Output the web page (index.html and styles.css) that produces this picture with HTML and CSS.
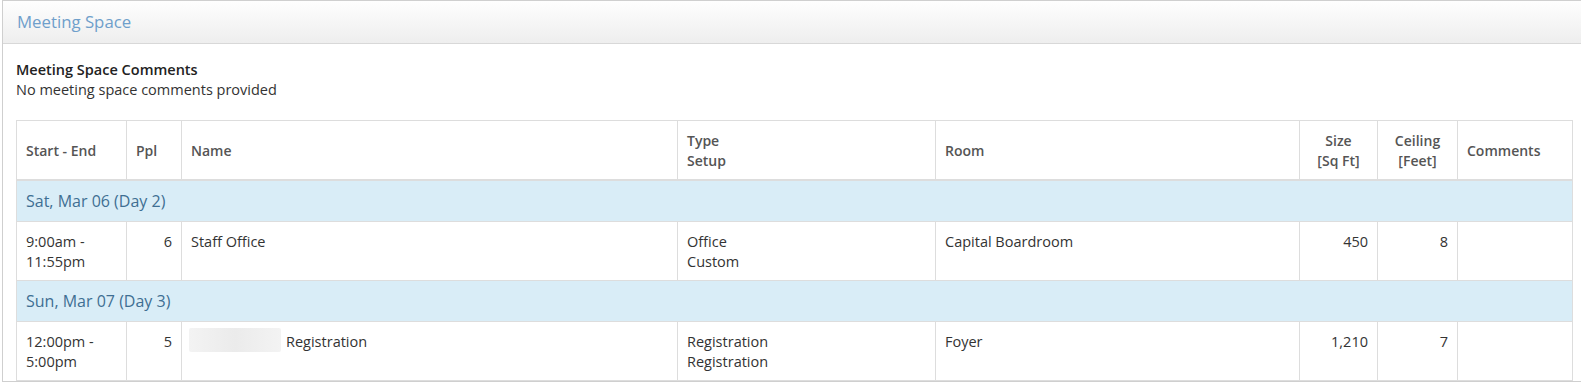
FILE: index.html
```html
<!DOCTYPE html>
<html>
<head>
<meta charset="utf-8">
<link rel="stylesheet" href="styles.css">
</head>
<body>
<div class="panel">
  <div class="panel-heading">Meeting Space</div>
  <div class="panel-body">
    <div class="comments">
      <div class="comments-title">Meeting Space Comments</div>
      <div>No meeting space comments provided</div>
    </div>
    <table class="grid">
      <colgroup>
        <col class="c-time"><col class="c-ppl"><col class="c-name"><col class="c-type"><col class="c-room"><col class="c-size"><col class="c-ceil"><col class="c-comm">
      </colgroup>
      <thead>
        <tr>
          <th>Start - End</th>
          <th>Ppl</th>
          <th>Name</th>
          <th>Type<br>Setup</th>
          <th>Room</th>
          <th class="center">Size<br>[Sq Ft]</th>
          <th class="center">Ceiling<br>[Feet]</th>
          <th>Comments</th>
        </tr>
      </thead>
      <tbody>
        <tr class="day"><td colspan="8">Sat, Mar 06 (Day 2)</td></tr>
        <tr>
          <td>9:00am -<br>11:55pm</td>
          <td class="num">6</td>
          <td>Staff Office</td>
          <td>Office<br>Custom</td>
          <td>Capital Boardroom</td>
          <td class="num">450</td>
          <td class="num">8</td>
          <td></td>
        </tr>
        <tr class="day"><td colspan="8">Sun, Mar 07 (Day 3)</td></tr>
        <tr>
          <td>12:00pm -<br>5:00pm</td>
          <td class="num">5</td>
          <td><span class="redacted"></span>Registration</td>
          <td>Registration<br>Registration</td>
          <td>Foyer</td>
          <td class="num">1,210</td>
          <td class="num">7</td>
          <td></td>
        </tr>
      </tbody>
    </table>
  </div>
</div>
</body>
</html>
```
FILE: styles.css
```css
html, body {
  margin: 0;
  padding: 0;
  background: #fff;
  overflow: hidden;
}
body {
  font-family: "Open Sans", "Liberation Sans", sans-serif;
  font-size: 14.5px;
  line-height: 20px;
  color: #333;
}
.panel {
  box-sizing: border-box;
  width: 1584px;
  margin-left: 2px;
  border: 1px solid #cfcfcf;
  background: #fff;
}
.panel-heading {
  height: 43px;
  box-sizing: border-box;
  padding: 10px 14px 11px;
  font-size: 16.8px;
  line-height: 22px;
  color: #6f9fcb;
  background: linear-gradient(to bottom, #fefefe 0%, #eeeeee 100%);
  border-bottom: 1px solid #d8d8d8;
}
.panel-body {
  padding: 16px 13px 0;
}
.comments-title {
  font-weight: 600;
  color: #222;
}
.grid {
  margin-top: 20px;
  width: 1556px;
  table-layout: fixed;
  border-collapse: collapse;
  border: 1px solid #ddd;
}
.c-time { width: 110px; }
.c-ppl { width: 55px; }
.c-name { width: 496px; }
.c-type { width: 258px; }
.c-room { width: 364px; }
.c-size { width: 78px; }
.c-ceil { width: 80px; }
.c-comm { width: 115px; }
.grid th, .grid td {
  border: 1px solid #ddd;
  text-align: left;
}
.grid th {
  font-size: 14px;
  font-weight: 600;
  color: #555;
  vertical-align: middle;
  padding: 10px 9px 8px;
  height: 40px;
  border-bottom: 2px solid #ddd;
}
.grid td {
  vertical-align: top;
  padding: 10px 9px 8px;
  height: 40px;
}
.grid th.center { text-align: center; }
.grid td.num { text-align: right; }
.grid tr.day td {
  background: #d9edf7;
  color: #3f6f93;
  font-size: 16px;
  line-height: 24px;
  padding: 8px 9px;
  height: 24px;
}
.redacted {
  display: inline-block;
  width: 92px;
  height: 24px;
  margin: -6px 5px 0 -2px;
  vertical-align: middle;
  background: linear-gradient(to right, #f3f3f3, #ebebeb 50%, #f3f3f3);
  border-radius: 2px;
}
```
